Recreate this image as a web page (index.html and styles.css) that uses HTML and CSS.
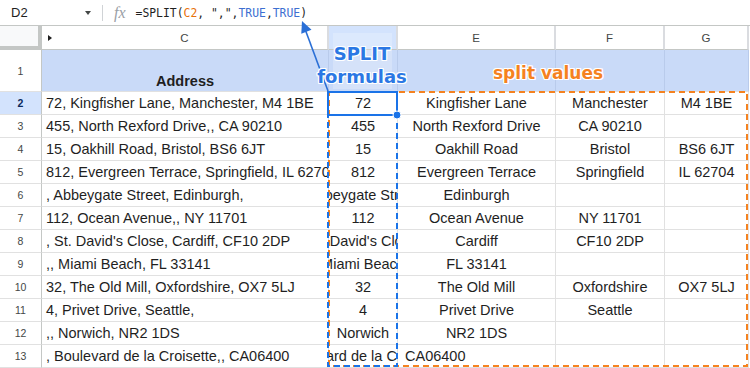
FILE: index.html
```html
<!DOCTYPE html>
<html>
<head>
<meta charset="utf-8">
<link rel="stylesheet" href="styles.css">
</head>
<body>
<div class="fbar">
  <div class="namebox"><span>D2</span><span class="caret"></span></div>
  <div class="sep"></div>
  <span class="fx">fx</span>
  <span class="formula">=SPLIT(<span class="ref">C2</span>, ",",<span class="bool">TRUE</span>,<span class="bool">TRUE</span>)</span>
</div>
<div class="sheet">
  <div class="cell corner"></div>
  <div class="cell ch ch-c">C</div>
  <div class="cell ch ch-sel"></div>
  <div class="cell ch">E</div>
  <div class="cell ch">F</div>
  <div class="cell ch">G</div>

  <div class="cell num">1</div>
  <div class="cell hd hd-addr">Address</div>
  <div class="cell hd"></div>
  <div class="cell hd"></div>
  <div class="cell hd"></div>
  <div class="cell hd"></div>

  <div class="cell num num-sel">2</div>
  <div class="cell addr">72, Kingfisher Lane, Manchester, M4 1BE</div>
  <div class="cell val">72</div>
  <div class="cell val">Kingfisher Lane</div>
  <div class="cell val">Manchester</div>
  <div class="cell val">M4 1BE</div>

  <div class="cell num">3</div>
  <div class="cell addr">455, North Rexford Drive,, CA 90210</div>
  <div class="cell val">455</div>
  <div class="cell val">North Rexford Drive</div>
  <div class="cell val">CA 90210</div>
  <div class="cell val"></div>

  <div class="cell num">4</div>
  <div class="cell addr">15, Oakhill Road, Bristol, BS6 6JT</div>
  <div class="cell val">15</div>
  <div class="cell val">Oakhill Road</div>
  <div class="cell val">Bristol</div>
  <div class="cell val">BS6 6JT</div>

  <div class="cell num">5</div>
  <div class="cell addr">812, Evergreen Terrace, Springfield, IL 62704</div>
  <div class="cell val">812</div>
  <div class="cell val">Evergreen Terrace</div>
  <div class="cell val">Springfield</div>
  <div class="cell val">IL 62704</div>

  <div class="cell num">6</div>
  <div class="cell addr">, Abbeygate Street, Edinburgh,</div>
  <div class="cell val">Abbeygate Street</div>
  <div class="cell val">Edinburgh</div>
  <div class="cell val"></div>
  <div class="cell val"></div>

  <div class="cell num">7</div>
  <div class="cell addr">112, Ocean Avenue,, NY 11701</div>
  <div class="cell val">112</div>
  <div class="cell val">Ocean Avenue</div>
  <div class="cell val">NY 11701</div>
  <div class="cell val"></div>

  <div class="cell num">8</div>
  <div class="cell addr">, St. David's Close, Cardiff, CF10 2DP</div>
  <div class="cell val">St. David's Close</div>
  <div class="cell val">Cardiff</div>
  <div class="cell val">CF10 2DP</div>
  <div class="cell val"></div>

  <div class="cell num">9</div>
  <div class="cell addr">,, Miami Beach, FL 33141</div>
  <div class="cell val">Miami Beach</div>
  <div class="cell val">FL 33141</div>
  <div class="cell val"></div>
  <div class="cell val"></div>

  <div class="cell num">10</div>
  <div class="cell addr">32, The Old Mill, Oxfordshire, OX7 5LJ</div>
  <div class="cell val">32</div>
  <div class="cell val">The Old Mill</div>
  <div class="cell val">Oxfordshire</div>
  <div class="cell val">OX7 5LJ</div>

  <div class="cell num">11</div>
  <div class="cell addr">4, Privet Drive, Seattle,</div>
  <div class="cell val">4</div>
  <div class="cell val">Privet Drive</div>
  <div class="cell val">Seattle</div>
  <div class="cell val"></div>

  <div class="cell num">12</div>
  <div class="cell addr">,, Norwich, NR2 1DS</div>
  <div class="cell val">Norwich</div>
  <div class="cell val">NR2 1DS</div>
  <div class="cell val"></div>
  <div class="cell val"></div>

  <div class="cell num">13</div>
  <div class="cell addr">, Boulevard de la Croisette,, CA06400</div>
  <div class="cell val">Boulevard de la Croisette</div>
  <div class="cell val val-left">CA06400</div>
  <div class="cell val"></div>
  <div class="cell val"></div>
</div>

<svg class="overlay" width="750" height="368" viewBox="0 0 750 368">
  <rect x="329" y="92" width="418" height="274" fill="none" stroke="#f5821f" stroke-width="2" stroke-dasharray="6 4"/>
  <rect x="328" y="92" width="69" height="274" fill="#fff" fill-opacity="0" stroke="#1a73e8" stroke-width="2" stroke-dasharray="6 4"/>
  <rect x="328" y="92" width="69" height="23" fill="none" stroke="#1a73e8" stroke-width="2"/>
  <circle cx="397" cy="115" r="4" fill="#1a73e8" stroke="#fff" stroke-width="1"/>
  <line x1="328" y1="91" x2="305" y2="29" stroke="#2a6fd6" stroke-width="1.6"/>
  <polygon points="302,21 311.5,29.8 301.3,33.8" fill="#2a6fd6"/>
</svg>

<div class="lbl-box"></div>
<div class="lbl lbl-split">SPLIT<br>formulas</div>
<div class="lbl lbl-values">split values</div>
</body>
</html>
```

FILE: styles.css
```css
body {
  margin: 0;
  width: 750px;
  height: 368px;
  overflow: hidden;
  position: relative;
  background: #fff;
  font-family: "Liberation Sans", Arial, sans-serif;
  color: #1f1f1f;
}

.fbar {
  height: 25px;
  border-bottom: 1px solid #c4c7c5;
  display: flex;
  align-items: center;
}

.namebox {
  width: 100px;
  box-sizing: border-box;
  padding: 0 9px 0 11px;
  display: flex;
  align-items: center;
  justify-content: space-between;
  font-size: 13px;
  color: #1f1f1f;
}

.caret {
  width: 0;
  height: 0;
  border-left: 3.5px solid transparent;
  border-right: 3.5px solid transparent;
  border-top: 4px solid #444746;
}

.sep {
  width: 1px;
  height: 16px;
  background: #d0d3d6;
  margin: 0 11px 0 2px;
}

.fx {
  font-family: "Liberation Serif", serif;
  font-style: italic;
  font-size: 16px;
  color: #9aa0a6;
  margin-right: 10px;
}

.formula {
  font-family: "DejaVu Sans Mono", monospace;
  font-size: 11.4px;
  color: #1f1f1f;
  white-space: pre;
}

.ref { color: #e8710a; }
.bool { color: #3d6fd1; }

.sheet {
  display: grid;
  grid-template-columns: 42px 287px 69px 158px 109px 84px;
  grid-template-rows: 24px 42px repeat(12, 23px);
}

.cell {
  box-sizing: border-box;
  border-right: 1px solid #e1e1e1;
  border-bottom: 1px solid #e1e1e1;
  display: flex;
  align-items: center;
  overflow: hidden;
  white-space: nowrap;
  font-size: 14.5px;
}

.corner {
  background: #f8f9fa;
  border-right: 4px solid #c4c7c5;
  border-bottom: 4px solid #c4c7c5;
}

.ch {
  justify-content: center;
  font-size: 11.5px;
  color: #444746;
  border-right: 2px solid #dadce0;
  border-bottom: 1px solid #c4c7c5;
  position: relative;
}

.ch-c::before {
  content: "";
  position: absolute;
  left: 6px;
  top: 9px;
  border-top: 3px solid transparent;
  border-bottom: 3px solid transparent;
  border-left: 4px solid #1f1f1f;
}

.ch-sel { background: #d3e3fd; }

.num {
  justify-content: center;
  font-size: 10.5px;
  color: #444746;
  border-right-color: #c4c7c5;
  border-bottom-color: #e1e1e1;
}

.num-sel {
  background: #d3e3fd;
  font-weight: bold;
  color: #0b2a5c;
}

.hd {
  background: #c9daf8;
  border-right-color: #b9cbeb;
  border-bottom-color: #e1e1e1;
}

.hd-addr {
  justify-content: center;
  align-items: flex-end;
  padding-bottom: 2px;
  font-weight: bold;
}

.addr { padding-left: 4px; }

.val { justify-content: center; }
.val-left { justify-content: flex-start; padding-left: 7px; }

.overlay {
  position: absolute;
  left: 0;
  top: 0;
  pointer-events: none;
}

.lbl-box {
  position: absolute;
  left: 333px;
  top: 33px;
  width: 59px;
  height: 56px;
  background: rgba(255, 255, 255, 0.22);
}

.lbl {
  position: absolute;
  font-family: "DejaVu Sans", Verdana, sans-serif;
  font-weight: bold;
  white-space: nowrap;
  text-shadow: 1px 0 0 #fff, -1px 0 0 #fff, 0 1px 0 #fff, 0 -1px 0 #fff,
    1px 1px 0 #fff, -1px -1px 0 #fff, 1px -1px 0 #fff, -1px 1px 0 #fff;
}

.lbl-split {
  left: 312px;
  top: 42px;
  width: 100px;
  text-align: center;
  font-size: 18px;
  line-height: 23px;
  color: #2b78e4;
}

.lbl-values {
  left: 493px;
  top: 62px;
  font-size: 17px;
  line-height: 22px;
  color: #f5821f;
}
```
